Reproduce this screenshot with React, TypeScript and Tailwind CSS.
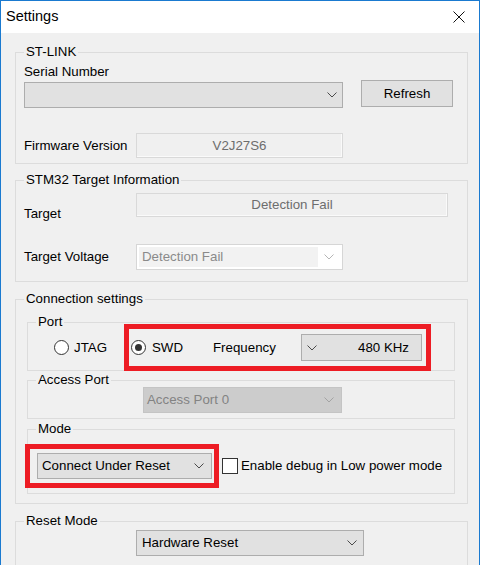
import type { ReactNode } from "react";

function Chevron({ color = "#4a4a4a" }: { color?: string }) {
  return (
    <svg width="10" height="6" viewBox="0 0 10 6" className="shrink-0">
      <path d="M0.5 0.5 L5 5 L9.5 0.5" fill="none" stroke={color} strokeWidth="1" />
    </svg>
  );
}

function Group({ title, className = "", children }: { title: string; className?: string; children: ReactNode }) {
  return (
    <fieldset className={`border border-[#dcdcdc] ${className}`}>
      <legend className="ml-[8px] px-[2px] leading-[16px]">{title}</legend>
      {children}
    </fieldset>
  );
}

function Radio({ checked }: { checked?: boolean }) {
  return (
    <span className="flex h-[15px] w-[15px] shrink-0 items-center justify-center rounded-full border border-[#333] bg-white">
      {checked && <span className="h-[7px] w-[7px] rounded-full bg-[#333]" />}
    </span>
  );
}

export default function App() {
  return (
    <div className="relative h-[565px] w-[480px] overflow-hidden border-l border-r border-t border-[#1a7ad0] bg-[#f0f0f0] font-['Liberation_Sans',Arial,sans-serif] text-[13.3px] text-black">
      {/* title bar */}
      <div className="flex h-[32px] items-center justify-between bg-white">
        <span className="pl-[5px] text-[14.5px]">Settings</span>
        <svg width="12" height="12" viewBox="0 0 12 12" className="mr-[14px]">
          <path d="M0.5 0.5 L11.5 11.5 M11.5 0.5 L0.5 11.5" stroke="#111" strokeWidth="1" />
        </svg>
      </div>

      <div className="ml-[14px] w-[453px]">
        <Group title="ST-LINK" className="mt-[11px]">
          <div className="pb-[5px] pl-[8px] pt-[4px]">
            <div className="flex items-end">
              <div>
                <div className="leading-[16px]">Serial Number</div>
                <div className="mt-[2px] flex h-[26px] w-[319px] items-center justify-end border border-[#adadad] bg-[#e1e1e1] pr-[5px]">
                  <Chevron />
                </div>
              </div>
              <button className="mb-[1px] ml-[18px] h-[27px] w-[92px] border border-[#adadad] bg-[#e1e1e1]">Refresh</button>
            </div>
            <div className="mt-[25px] flex items-center">
              <span className="w-[112px]">Firmware Version</span>
              <div className="flex h-[25px] w-[207px] items-center justify-center border border-[#d9d9d9] bg-[#f0f0f0] text-[#6d6d6d] shadow-[inset_-1px_-1px_0_#fafafa]">
                V2J27S6
              </div>
            </div>
          </div>
        </Group>

        <Group title="STM32 Target Information" className="mt-[8px]">
          <div className="pb-[11px] pl-[8px]">
            <div className="mt-[5px] flex items-start">
              <span className="mt-[13px] w-[112px] leading-[16px]">Target</span>
              <div className="flex h-[24px] w-[312px] items-center justify-center border border-[#d9d9d9] bg-[#f0f0f0] text-[#6d6d6d] shadow-[inset_-1px_-1px_0_#fafafa]">
                Detection Fail
              </div>
            </div>
            <div className="mt-[22px] flex h-[26px] items-center">
              <span className="w-[112px]">Target Voltage</span>
              <div className="flex h-[26px] w-[207px] items-stretch border border-[#d6d6d6] bg-white p-[2px]">
                <div className="flex flex-1 items-center bg-[#f2f2f2] pl-[3px] text-[#8a8a8a]">Detection Fail</div>
                <div className="flex w-[22px] items-center justify-center">
                  <Chevron color="#b5b5b5" />
                </div>
              </div>
            </div>
          </div>
        </Group>

        <Group title="Connection settings" className="mt-[9px]">
          <div className="pb-[9px]">
            <Group title="Port" className="ml-[11px] mt-[7px] w-[428px]">
              <div className="mt-[4px] flex h-[27px] items-center">
                <span className="ml-[26px]">
                  <Radio />
                </span>
                <span className="ml-[5px] w-[52px]">JTAG</span>
                <span className="ml-[5px]">
                  <Radio checked />
                </span>
                <span className="ml-[6px] w-[61px]">SWD</span>
                <span className="w-[88px]">Frequency</span>
                <div className="flex h-[27px] w-[121px] items-center justify-between border border-[#adadad] bg-[#e1e1e1] pl-[5px] pr-[12px]">
                  <Chevron />
                  <span>480 KHz</span>
                </div>
              </div>
              <div className="h-[9px]" />
            </Group>

            <Group title="Access Port" className="ml-[11px] mt-[1px] w-[428px]">
              <div className="-mt-px pb-[5px]">
                <div className="ml-[115px] flex h-[26px] w-[199px] items-center justify-between border border-[#c4c4c4] bg-[#cccccc] pl-[3px] pr-[7px] text-[#838383]">
                  <span>Access Port 0</span>
                  <Chevron color="#a3a3a3" />
                </div>
              </div>
            </Group>

            <Group title="Mode" className="ml-[11px] mt-[2px] w-[428px]">
              <div className="mt-[16px] flex h-[26px] items-center">
                <div className="ml-[9px] flex h-[26px] w-[175px] items-center justify-between border border-[#adadad] bg-[#e1e1e1] pl-[4px] pr-[7px]">
                  <span>Connect Under Reset</span>
                  <Chevron />
                </div>
                <span className="ml-[10px] h-[16px] w-[16px] border border-[#333] bg-white" />
                <span className="ml-[3px]">Enable debug in Low power mode</span>
              </div>
              <div className="h-[14px]" />
            </Group>
          </div>
        </Group>

        <Group title="Reset Mode" className="mt-[9px]">
          <div className="pb-[30px]">
            <div className="ml-[120px] mt-[1px] flex h-[26px] w-[228px] items-center justify-between border border-[#adadad] bg-[#e1e1e1] pl-[5px] pr-[6px]">
              <span>Hardware Reset</span>
              <Chevron />
            </div>
          </div>
        </Group>
      </div>

      {/* red annotation boxes */}
      <div className="absolute left-[123px] top-[323px] h-[47px] w-[307px] border-[5px] border-[#ed1c24]" />
      <div className="absolute left-[24px] top-[443px] h-[44px] w-[194px] border-[5px] border-[#ed1c24]" />
    </div>
  );
}
